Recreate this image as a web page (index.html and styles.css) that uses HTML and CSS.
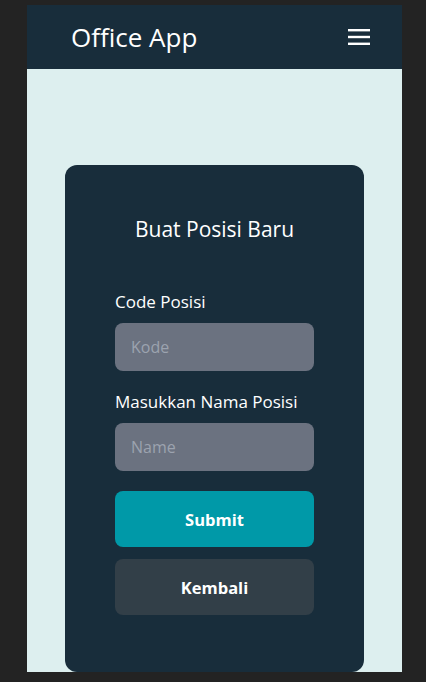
FILE: index.html
```html
<!DOCTYPE html>
<html lang="id">
<head>
<meta charset="utf-8">
<title>Office App</title>
<link rel="stylesheet" href="styles.css">
</head>
<body>
<div class="frame">
  <header class="topbar">
    <span class="brand">Office App</span>
    <button class="menu" aria-label="Menu">
      <svg width="22" height="18" viewBox="0 0 22 18"><rect x="0" y="1" width="22" height="2.4" fill="#fff"/><rect x="0" y="7.8" width="22" height="2.4" fill="#fff"/><rect x="0" y="14.6" width="22" height="2.4" fill="#fff"/></svg>
    </button>
  </header>
  <main class="content">
    <section class="card">
      <h1 class="title">Buat Posisi Baru</h1>
      <form class="form">
        <label class="label" for="kode">Code Posisi</label>
        <input class="input" id="kode" type="text" placeholder="Kode">
        <label class="label label-2" for="nama">Masukkan Nama Posisi</label>
        <input class="input" id="nama" type="text" placeholder="Name">
        <button type="button" class="btn btn-submit">Submit</button>
        <button type="button" class="btn btn-back">Kembali</button>
      </form>
    </section>
  </main>
</div>
</body>
</html>
```
FILE: styles.css
```css
* { box-sizing: border-box; }
body {
  margin: 0;
  background: #232323;
  font-family: "Open Sans", "Liberation Sans", sans-serif;
}
.frame {
  width: 375px;
  height: 667px;
  margin: 5px 0 0 27px;
  background: #ddefef;
  display: flex;
  flex-direction: column;
  overflow: hidden;
}
.topbar {
  height: 64px;
  flex: none;
  background: #182d3b;
  display: flex;
  align-items: center;
  justify-content: space-between;
  padding: 0 32px 0 44px;
}
.brand {
  color: #fff;
  font-size: 26px;
  line-height: 1;
}
.menu {
  background: none;
  border: 0;
  padding: 0;
  display: flex;
  width: 22px;
  height: 18px;
}
.content {
  flex: 1;
  display: flex;
  padding: 96px 38px 0;
}
.card {
  width: 299px;
  min-width: 0;
  background: #182d3b;
  border-radius: 12px;
  padding: 50px 50px 0;
}
.title {
  margin: 0;
  color: #fff;
  font-weight: 400;
  font-size: 21px;
  line-height: 28px;
  text-align: center;
}
.form {
  display: flex;
  flex-direction: column;
  margin-top: 48px;
}
.label {
  color: #fff;
  font-size: 17px;
  line-height: 22px;
  margin-bottom: 10px;
}
.label-2 { margin-top: 20px; }
.input {
  width: 100%;
  min-width: 0;
  height: 48px;
  border: 0;
  border-radius: 8px;
  background: #6b7280;
  padding: 0 16px;
  font: inherit;
  font-size: 16px;
  color: #fff;
}
.input::placeholder { color: #9ca3af; }
.btn {
  height: 56px;
  border: 0;
  border-radius: 8px;
  color: #fff;
  font: inherit;
  font-weight: 700;
  font-size: 16.5px;
}
.btn-submit { margin-top: 20px; background: #0099a8; }
.btn-back { margin-top: 12px; background: #323f48; }
```
